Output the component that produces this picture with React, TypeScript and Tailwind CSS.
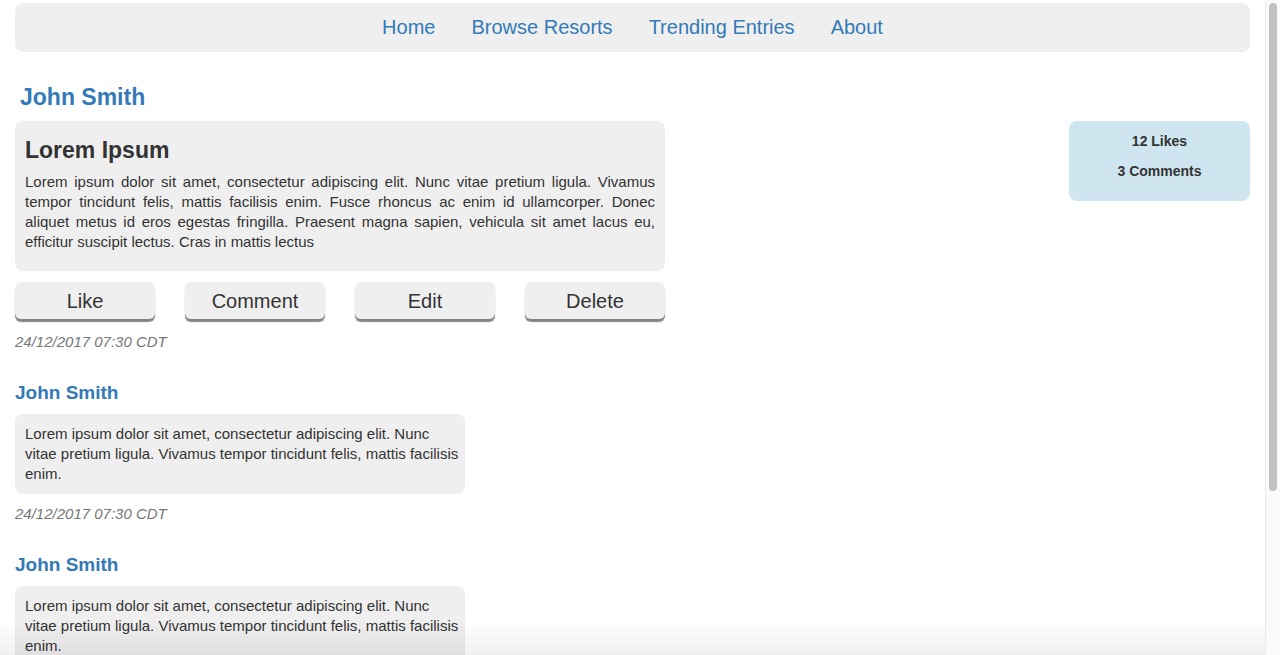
const navLinks = ["Home", "Browse Resorts", "Trending Entries", "About"];

const lorem =
  "Lorem ipsum dolor sit amet, consectetur adipiscing elit. Nunc vitae pretium ligula. Vivamus tempor tincidunt felis, mattis facilisis enim. Fusce rhoncus ac enim id ullamcorper. Donec aliquet metus id eros egestas fringilla. Praesent magna sapien, vehicula sit amet lacus eu, efficitur suscipit lectus. Cras in mattis lectus";

const comments = [
  {
    author: "John Smith",
    text: "Lorem ipsum dolor sit amet, consectetur adipiscing elit. Nunc vitae pretium ligula. Vivamus tempor tincidunt felis, mattis facilisis enim.",
    date: "24/12/2017 07:30 CDT",
  },
  {
    author: "John Smith",
    text: "Lorem ipsum dolor sit amet, consectetur adipiscing elit. Nunc vitae pretium ligula. Vivamus tempor tincidunt felis, mattis facilisis enim.",
    date: "24/12/2017 07:30 CDT",
  },
];

function ActionButton({ label }: { label: string }) {
  return (
    <button
      type="button"
      className="w-[140px] h-[37px] rounded-[6px] bg-[#efefef] text-[20px] text-[#333] shadow-[0_3px_1px_#858585]"
    >
      {label}
    </button>
  );
}

export default function App() {
  return (
    <div className="min-h-[875px] bg-white pl-[15px] pr-[30px] pt-[3px] font-['Liberation_Sans',Arial,sans-serif] text-[#333]">
      <nav className="flex h-[49px] items-center justify-center gap-[36px] rounded-[8px] bg-[#efefef] pb-[2px]">
        {navLinks.map((link) => (
          <a key={link} href="#" className="text-[20px] text-[#337ab7]">
            {link}
          </a>
        ))}
      </nav>

      <h2 className="mt-[31px] ml-[5px] text-[23px] font-bold leading-[28px] text-[#337ab7]">
        John Smith
      </h2>

      <div className="mt-[10px] flex items-start justify-between">
        <div className="w-[650px]">
          <div className="rounded-[8px] bg-[#efefef] px-[10px] pt-[15px] pb-[19px]">
            <h3 className="text-[23px] font-bold leading-[28px] text-[#333]">Lorem Ipsum</h3>
            <p className="mt-[8px] text-justify text-[15px] leading-[20px]">{lorem}</p>
          </div>
          <div className="mt-[11px] flex justify-between">
            <ActionButton label="Like" />
            <ActionButton label="Comment" />
            <ActionButton label="Edit" />
            <ActionButton label="Delete" />
          </div>
          <p className="mt-[13px] text-[15px] italic leading-[20px] text-[#777]">24/12/2017 07:30 CDT</p>
        </div>

        <div className="w-[181px] rounded-[8px] bg-[#cfe6f0] pt-[10px] pb-[20px] text-center text-[14px] font-bold leading-[20px]">
          <p>12 Likes</p>
          <p className="mt-[10px]">3 Comments</p>
        </div>
      </div>

      <div>
        {comments.map((c, i) => (
          <div key={i} className="mt-[29px]">
            <h4 className="text-[19px] font-bold leading-[24px] text-[#337ab7]">{c.author}</h4>
            <div className="mt-[9px] w-[450px] rounded-[8px] bg-[#efefef] py-[10px] pl-[10px] pr-[2px] text-[15px] leading-[20px]">
              {c.text}
            </div>
            <p className="mt-[10px] text-[15px] italic leading-[20px] text-[#777]">{c.date}</p>
          </div>
        ))}
      </div>

      <div className="pointer-events-none fixed inset-x-0 bottom-0 h-[35px] bg-linear-to-b from-transparent to-black/[0.06]" />

      <div className="fixed top-0 right-0 h-screen w-[15px] border-l border-[#e8e8e8] bg-[#fafafa] px-[3px] pt-[3px]">
        <div className="h-[488px] rounded-full bg-[#c1c1c1]" />
      </div>
    </div>
  );
}
